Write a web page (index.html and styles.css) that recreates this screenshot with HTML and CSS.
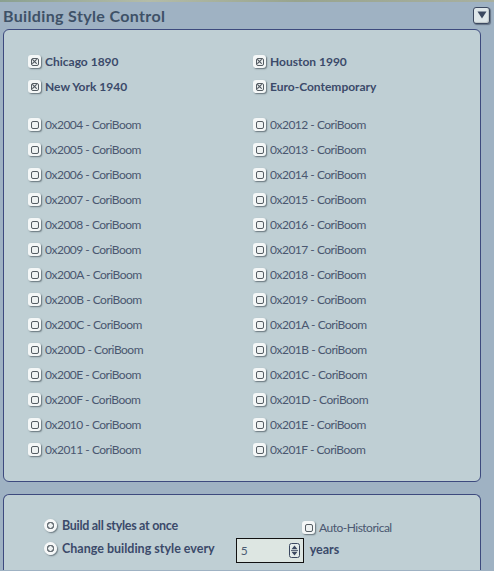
FILE: index.html
```html
<!DOCTYPE html>
<html>
<head>
<meta charset="utf-8">
<link rel="stylesheet" href="styles.css">
</head>
<body>
<div class="window">
  <div class="topstrip"></div>
  <div class="titlebar">
    <h1 class="title">Building Style Control</h1>
    <button class="collapse"><svg width="10" height="8" viewBox="0 0 10 8"><path d="M0.5 0.5 H9.5 L5 7.5 Z" fill="#3b4860"/></svg></button>
  </div>
  <div class="panel styles">
    <div class="grid featured">
      <label class="cb on bold"><span class="box"><svg class="x" width="5" height="5" viewBox="0 0 5 5"><path d="M0.3 0.3 L4.7 4.7 M4.7 0.3 L0.3 4.7" stroke="#505860" stroke-width="1.1"/></svg></span>Chicago 1890</label>
      <label class="cb on bold"><span class="box"><svg class="x" width="5" height="5" viewBox="0 0 5 5"><path d="M0.3 0.3 L4.7 4.7 M4.7 0.3 L0.3 4.7" stroke="#505860" stroke-width="1.1"/></svg></span>Houston 1990</label>
      <label class="cb on bold"><span class="box"><svg class="x" width="5" height="5" viewBox="0 0 5 5"><path d="M0.3 0.3 L4.7 4.7 M4.7 0.3 L0.3 4.7" stroke="#505860" stroke-width="1.1"/></svg></span>New York 1940</label>
      <label class="cb on bold"><span class="box"><svg class="x" width="5" height="5" viewBox="0 0 5 5"><path d="M0.3 0.3 L4.7 4.7 M4.7 0.3 L0.3 4.7" stroke="#505860" stroke-width="1.1"/></svg></span>Euro-Contemporary</label>
    </div>
    <div class="grid list">
      <label class="cb"><span class="box"></span>0x2004 - CoriBoom</label>
      <label class="cb"><span class="box"></span>0x2012 - CoriBoom</label>
      <label class="cb"><span class="box"></span>0x2005 - CoriBoom</label>
      <label class="cb"><span class="box"></span>0x2013 - CoriBoom</label>
      <label class="cb"><span class="box"></span>0x2006 - CoriBoom</label>
      <label class="cb"><span class="box"></span>0x2014 - CoriBoom</label>
      <label class="cb"><span class="box"></span>0x2007 - CoriBoom</label>
      <label class="cb"><span class="box"></span>0x2015 - CoriBoom</label>
      <label class="cb"><span class="box"></span>0x2008 - CoriBoom</label>
      <label class="cb"><span class="box"></span>0x2016 - CoriBoom</label>
      <label class="cb"><span class="box"></span>0x2009 - CoriBoom</label>
      <label class="cb"><span class="box"></span>0x2017 - CoriBoom</label>
      <label class="cb"><span class="box"></span>0x200A - CoriBoom</label>
      <label class="cb"><span class="box"></span>0x2018 - CoriBoom</label>
      <label class="cb"><span class="box"></span>0x200B - CoriBoom</label>
      <label class="cb"><span class="box"></span>0x2019 - CoriBoom</label>
      <label class="cb"><span class="box"></span>0x200C - CoriBoom</label>
      <label class="cb"><span class="box"></span>0x201A - CoriBoom</label>
      <label class="cb"><span class="box"></span>0x200D - CoriBoom</label>
      <label class="cb"><span class="box"></span>0x201B - CoriBoom</label>
      <label class="cb"><span class="box"></span>0x200E - CoriBoom</label>
      <label class="cb"><span class="box"></span>0x201C - CoriBoom</label>
      <label class="cb"><span class="box"></span>0x200F - CoriBoom</label>
      <label class="cb"><span class="box"></span>0x201D - CoriBoom</label>
      <label class="cb"><span class="box"></span>0x2010 - CoriBoom</label>
      <label class="cb"><span class="box"></span>0x201E - CoriBoom</label>
      <label class="cb"><span class="box"></span>0x2011 - CoriBoom</label>
      <label class="cb"><span class="box"></span>0x201F - CoriBoom</label>
    </div>
  </div>
  <div class="panel options">
    <div class="optrow first">
      <label class="rb bold"><span class="radio"></span>Build all styles at once</label>
      <label class="cb auto"><span class="box"></span>Auto-Historical</label>
    </div>
    <div class="optrow">
      <label class="rb bold"><span class="radio"></span>Change building style every</label>
      <div class="spin">
        <span class="val">5</span>
        <span class="arrows"><svg width="11" height="15" viewBox="0 0 11 15"><rect x="0.5" y="0.5" width="10" height="14" rx="2" fill="#e4ecea" stroke="#3b4860"/><path d="M2.5 6.3 L5.5 2.5 L8.5 6.3 Z M2.5 8.7 L5.5 12.5 L8.5 8.7 Z" fill="#3b4860"/><path d="M2 7.5 H9" stroke="#3b4860" stroke-width="0.8"/></svg></span>
      </div>
      <span class="years bold">years</span>
    </div>
  </div>
</div>
</body>
</html>
```
FILE: styles.css
```css
html, body {
  margin: 0;
  padding: 0;
}
body {
  background: #9fb2c3;
  font-family: Lato, "Open Sans", sans-serif;
  width: 494px;
  height: 571px;
  overflow: hidden;
}
.window {
  display: flex;
  flex-direction: column;
}
.topstrip {
  height: 2px;
  background: linear-gradient(90deg, #8aa090, #b4bca8 30%, #98a48e 60%, #a8b0a0);
}
.titlebar {
  height: 27px;
  display: flex;
  align-items: center;
  justify-content: space-between;
  padding: 0 4px 0 3px;
}
.title {
  margin: 0;
  font-size: 16px;
  font-weight: 700;
  color: #3e5167;
  letter-spacing: 0.35px;
}
.collapse {
  width: 17px;
  height: 17px;
  padding: 0;
  margin-top: -1px;
  border: 1px solid #3b4860;
  border-radius: 3px;
  background: #dfe7ea;
  box-shadow: 1px 1px 1px rgba(40, 50, 70, 0.5), inset -1px -1px 1px rgba(0,0,0,0.15);
  display: flex;
  align-items: center;
  justify-content: center;
}
.panel {
  margin: 0 13px 0 3px;
  background: #bfcfd4;
  border: 1px solid #3d4a7e;
  border-radius: 6px;
}
.styles {
  padding: 19px 0 20px 24px;
  height: 412px;
  box-sizing: content-box;
}
.grid {
  display: grid;
  grid-template-columns: 225px 225px;
  grid-auto-rows: 25px;
}
.featured {
  margin-bottom: 13px;
}
.cb, .rb {
  display: flex;
  align-items: center;
  gap: 4px;
  font-size: 12px;
  letter-spacing: -0.5px;
  color: #4a5770;
  white-space: nowrap;
}
.bold {
  font-weight: 700;
  color: #3b4a6a;
  letter-spacing: 0;
}
.box {
  position: relative;
  width: 13px;
  height: 13px;
  box-sizing: border-box;
  border-radius: 3px;
  background: #f4f7f7;
  box-shadow: 1px 1px 1.5px rgba(30, 40, 50, 0.55);
  flex: none;
}
.box::after {
  content: "";
  position: absolute;
  left: 2.5px;
  top: 2.5px;
  width: 8px;
  height: 8px;
  box-sizing: border-box;
  border: 1.5px solid #555d63;
  border-radius: 2px;
  background: #eef2f2;
}
.box .x {
  position: absolute;
  left: 4px;
  top: 4px;
  z-index: 1;
}
.options {
  margin-top: 12px;
  height: 56px;
  padding: 19px 0 0 40px;
  border-bottom: none;
  border-bottom-left-radius: 0;
  border-bottom-right-radius: 0;
}
.optrow {
  display: flex;
  align-items: center;
  height: 23px;
}
.optrow.first .rb {
  width: 258px;
  letter-spacing: -0.3px;
}
.rb {
  gap: 5px;
  font-size: 12.5px;
}
.radio {
  width: 13px;
  height: 13px;
  box-sizing: border-box;
  border-radius: 50%;
  background: radial-gradient(circle, #eef2f2 0 2px, #6a7278 2.5px 3.5px, #f6f8f8 4px);
  box-shadow: 1px 1px 1.5px rgba(30, 40, 50, 0.55);
  flex: none;
}
.auto {
  margin-top: 4px;
}
.optrow .rb + .spin {
  margin-left: 21px;
}
.spin {
  width: 68px;
  height: 25px;
  box-sizing: border-box;
  border: 1px solid #111;
  background: #dde6e2;
  display: flex;
  align-items: center;
  justify-content: space-between;
  padding: 0 3px 0 4px;
  margin-top: 4px;
  font-size: 12px;
  color: #4b5b72;
}
.arrows {
  display: flex;
}
.years {
  margin-left: 6px;
  margin-top: 2px;
  font-size: 12.5px;
}
```
